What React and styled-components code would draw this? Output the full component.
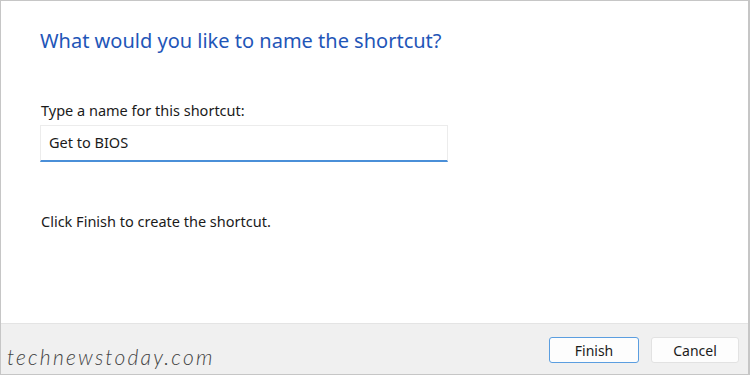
import React from "react";
import styled, { createGlobalStyle } from "styled-components";

const GlobalStyle = createGlobalStyle`
  html, body {
    margin: 0;
    padding: 0;
    background: #ffffff;
  }
  * {
    box-sizing: border-box;
  }
`;

const Dialog = styled.div`
  width: 750px;
  height: 375px;
  display: flex;
  flex-direction: column;
  border: 1px solid #c6c6c6;
  border-right-width: 2px;
  background: #ffffff;
  font-family: "Noto Sans", "Open Sans", sans-serif;
`;

const Body = styled.div`
  flex: 1;
  padding: 26px 0 0 39px;
  display: flex;
  flex-direction: column;
`;

const Title = styled.h1`
  margin: 0;
  font-size: 20px;
  font-weight: 400;
  color: #1f56b8;
`;

const Label = styled.div`
  margin-top: 46px;
  font-size: 14.5px;
  color: #1b1b1b;
  padding-left: 1px;
`;

const NameInput = styled.div`
  margin-top: 5px;
  width: 408px;
  height: 37px;
  display: flex;
  align-items: center;
  padding: 0 0 3px 8px;
  border: 1px solid #ececec;
  border-bottom: 2px solid #4a8fd8;
  font-size: 14.5px;
  color: #1b1b1b;
`;

const Hint = styled.div`
  margin-top: 49px;
  font-size: 14.5px;
  color: #1b1b1b;
  padding-left: 1px;
`;

const Footer = styled.div`
  height: 51px;
  background: #f0f0f0;
  border-top: 1px solid #e4e4e4;
  display: flex;
  align-items: center;
  justify-content: space-between;
  padding: 0 9px 0 6px;
`;

const Watermark = styled.div`
  font-family: "Lato", "Open Sans", sans-serif;
  font-style: italic;
  font-weight: 300;
  font-size: 21px;
  letter-spacing: 2.2px;
  color: #444;
  margin-top: 14px;
`;

const Buttons = styled.div`
  display: flex;
  gap: 12px;
  margin-top: 2px;
`;

const Button = styled.button`
  width: ${props => (props.primary ? "90px" : "88px")};
  height: 26px;
  border-radius: 3px;
  background: #fdfdfd;
  border: 1px solid ${props => (props.primary ? "#5b9ee0" : "#e2e2e2")};
  font-family: "Noto Sans", "Open Sans", sans-serif;
  font-size: 14px;
  color: #1b1b1b;
  padding: 0;
`;

export default function App() {
  return (
    <>
      <GlobalStyle />
      <Dialog>
        <Body>
          <Title>What would you like to name the shortcut?</Title>
          <Label>Type a name for this shortcut:</Label>
          <NameInput>Get to BIOS</NameInput>
          <Hint>Click Finish to create the shortcut.</Hint>
        </Body>
        <Footer>
          <Watermark>technewstoday.com</Watermark>
          <Buttons>
            <Button primary>Finish</Button>
            <Button>Cancel</Button>
          </Buttons>
        </Footer>
      </Dialog>
    </>
  );
}
